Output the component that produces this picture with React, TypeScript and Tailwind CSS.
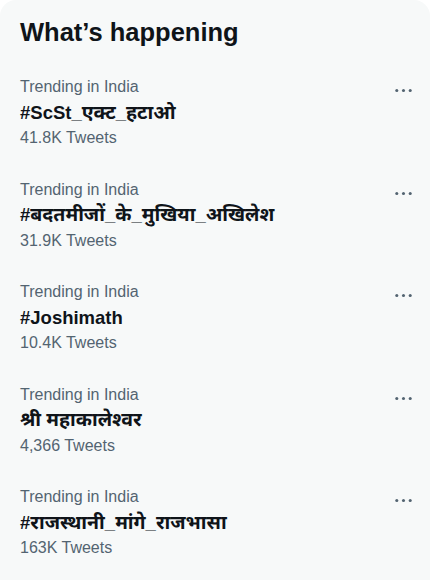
const TRENDS = [
  { context: 'Trending in India', name: '#ScSt_एक्ट_हटाओ', count: '41.8K Tweets' },
  { context: 'Trending in India', name: '#बदतमीजों_के_मुखिया_अखिलेश', count: '31.9K Tweets' },
  { context: 'Trending in India', name: '#Joshimath', count: '10.4K Tweets' },
  { context: 'Trending in India', name: 'श्री महाकालेश्वर', count: '4,366 Tweets' },
  { context: 'Trending in India', name: '#राजस्थानी_मांगे_राजभासा', count: '163K Tweets' },
];

// Devanagari runs get a slightly larger size so they line up with the Latin text
function TrendName({ text }: { text: string }) {
  const parts = text.split(/([\u0900-\u097F]+)/);
  return (
    <>
      {parts.map((p, i) =>
        /[\u0900-\u097F]/.test(p) ? (
          <span key={i} className="text-[19.5px]">{p}</span>
        ) : (
          <span key={i}>{p}</span>
        )
      )}
    </>
  );
}

function MoreIcon() {
  return (
    <svg viewBox="0 0 24 24" className="w-[23px] h-[23px]" fill="#536471">
      <circle cx="5" cy="12" r="1.6" />
      <circle cx="12" cy="12" r="1.6" />
      <circle cx="19" cy="12" r="1.6" />
    </svg>
  );
}

export default function App() {
  return (
    <div className="w-[430px] h-[586px] bg-white font-['Liberation_Sans','Noto_Sans',sans-serif]">
      <div className="h-[580px] bg-[#f7f9f9] rounded-t-2xl overflow-hidden">
        {/* Header */}
        <div className="pt-[17px] pb-[15px] px-5">
          <h2 className="text-[25.5px] leading-[30px] font-bold text-[#0f1419]">What’s happening</h2>
        </div>

        {TRENDS.map((t, i) => (
          <div key={i} className="relative pl-5 pr-[15px] pt-[15px] pb-[16.5px]">
            <div className="text-[16px] leading-[20px] h-[20px] text-[#536471]">{t.context}</div>
            <div className="mt-[2.5px] h-[25px] text-[18.5px] leading-[25px] font-bold text-[#0f1419] whitespace-nowrap">
              <TrendName text={t.name} />
            </div>
            <div className="mt-[3.5px] text-[16px] leading-[20px] h-[20px] text-[#536471]">{t.count}</div>
            <div className="absolute right-[15px] top-[17px]">
              <MoreIcon />
            </div>
          </div>
        ))}
      </div>
    </div>
  );
}
